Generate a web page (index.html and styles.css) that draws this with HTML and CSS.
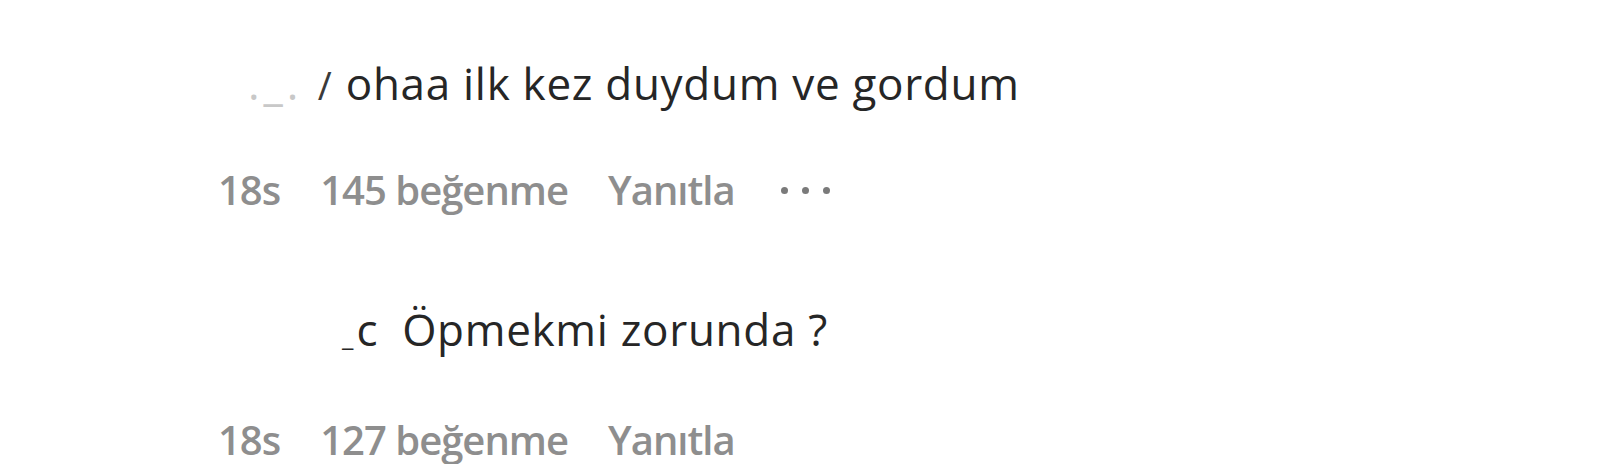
FILE: index.html
```html
<!doctype html>
<html lang="tr">
<head>
<meta charset="utf-8">
<meta name="viewport" content="width=device-width, initial-scale=1">
<title>Yorumlar</title>
<link rel="stylesheet" href="styles.css">
</head>
<body>
	<div class="yr-liste">
		<div class="yr-yorum">
			<div class="yr-metin">
				<span class="yr-kesik yr-kesik-1">._. <b>/</b></span>ohaa ilk kez duydum ve gordum
			</div>
			<div class="yr-alt">
				<span>18s</span>
				<span>145 beğenme</span>
				<span>Yanıtla</span>
				<span class="yr-diger"><i></i><i></i><i></i></span>
			</div>
		</div>
		<div class="yr-yorum yr-yorum-2">
			<div class="yr-metin yr-metin-2">
				<span class="yr-kullanici"><span class="yr-kesik-2">_</span>c</span>Öpmekmi zorunda ?
			</div>
			<div class="yr-alt">
				<span>18s</span>
				<span>127 beğenme</span>
				<span>Yanıtla</span>
			</div>
		</div>
	</div>
</body>
</html>
```

FILE: styles.css
```css
*
{
	margin: 0;
	padding: 0;
	box-sizing: border-box;
}
body
{
	background-color: #FFF;
	font-family: "Open Sans", "Noto Sans", Arial, sans-serif;
	overflow: hidden;
}
.yr-liste
{
	display: flex;
	flex-direction: column;
	gap: 89px;
	padding: 57px 0 0 218px;
}
.yr-yorum
{
	display: flex;
	flex-direction: column;
	gap: 55px;
}
.yr-yorum-2
{
	gap: 54px;
}
.yr-metin
{
	font-size: 44px;
	line-height: 52px;
	letter-spacing: 0.7px;
	color: #262626;
	padding-left: 30px;
	white-space: nowrap;
}
.yr-metin-2
{
	padding-left: 124px;
}
.yr-kesik
{
	color: #c8c8c8;
	letter-spacing: 4px;
	margin-right: 10px;
}
.yr-kesik b
{
	font-weight: 400;
	color: #3a3a3a;
	font-size: 38px;
}
.yr-kullanici
{
	margin-right: 24px;
}
.yr-kesik-2
{
	font-size: 26px;
	letter-spacing: 0;
	margin-right: 3px;
}
.yr-alt
{
	display: flex;
	align-items: center;
	gap: 40px;
	font-size: 40px;
	line-height: 48px;
	font-weight: 600;
	letter-spacing: -1px;
	color: #8e8e8e;
	white-space: nowrap;
}
.yr-diger
{
	display: flex;
	gap: 14px;
	padding-left: 6px;
}
.yr-diger i
{
	width: 7px;
	height: 7px;
	border-radius: 50%;
	background-color: #7a7a7a;
}
```
